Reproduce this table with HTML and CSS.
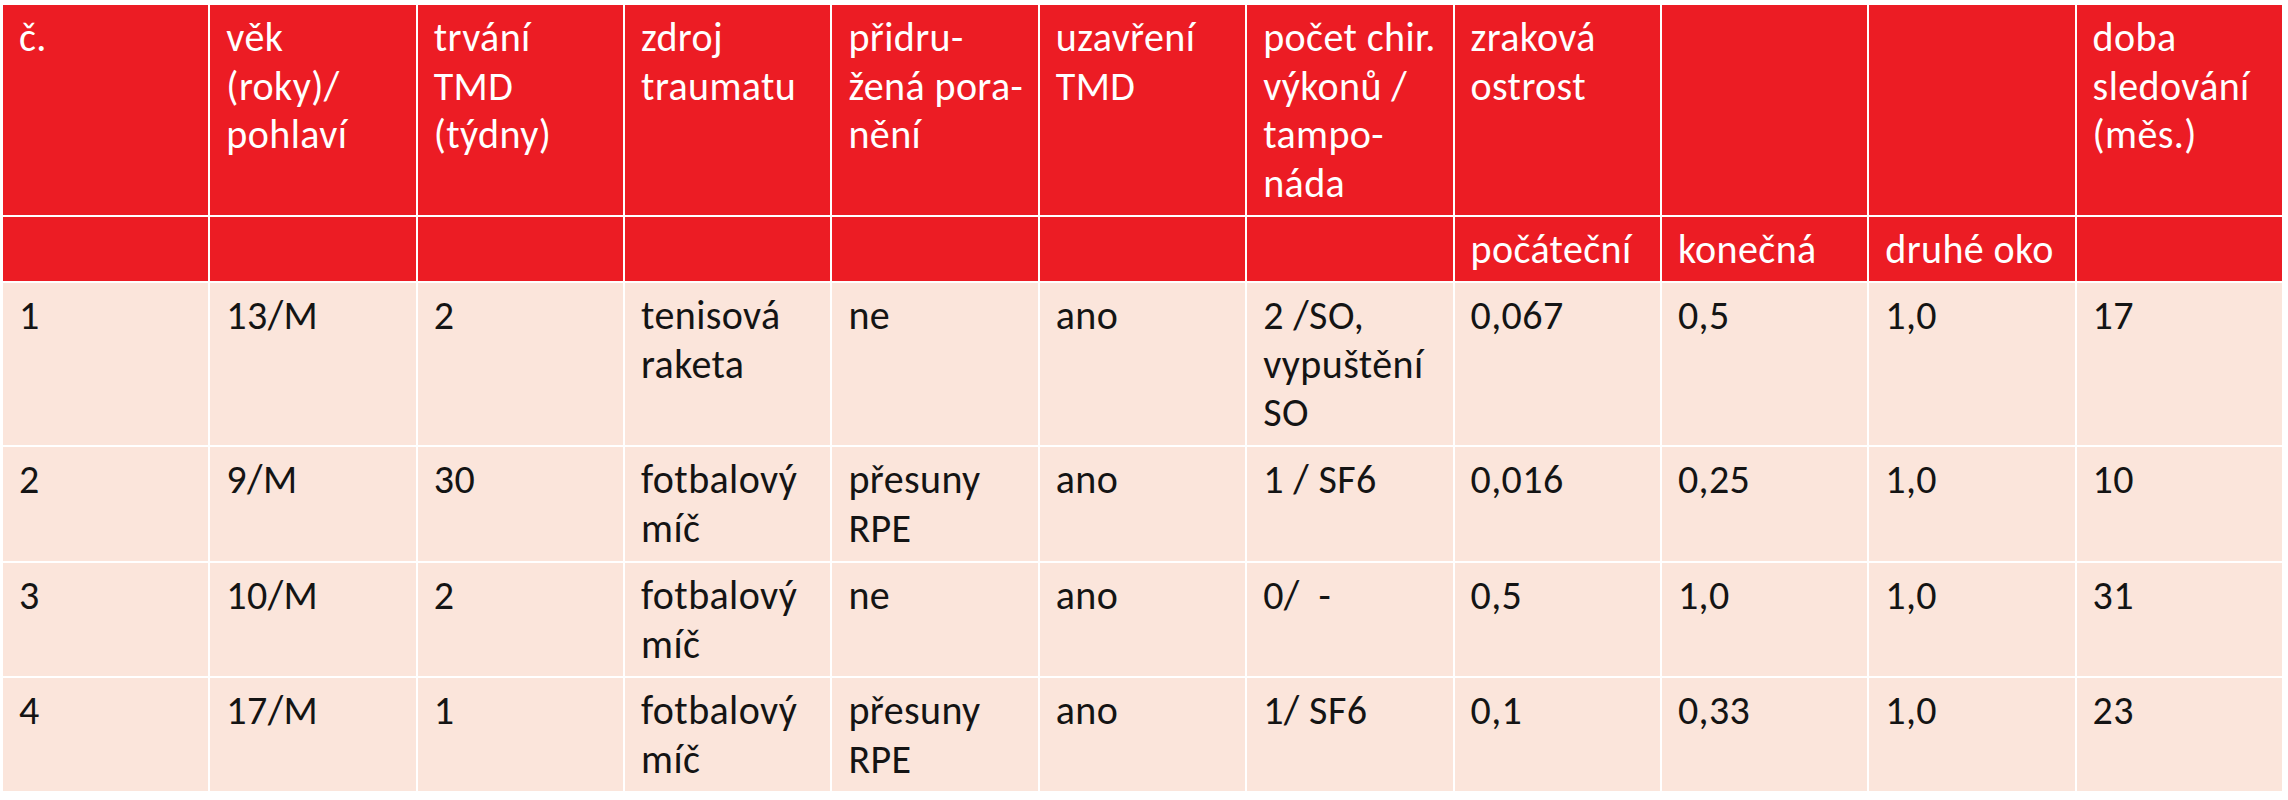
FILE: index.html
```html
<!DOCTYPE html>
<html lang="cs">
<head>
<meta charset="utf-8">
<title>Tabulka</title>
<link rel="stylesheet" href="styles.css">
</head>
<body>
<table class="data">
  <colgroup>
    <col class="c"><col class="c"><col class="c"><col class="c"><col class="c"><col class="c"><col class="c"><col class="c"><col class="c"><col class="c"><col class="c">
  </colgroup>
  <thead>
    <tr class="h1">
      <th>č.</th>
      <th>věk<br>(roky)/<br>pohlaví</th>
      <th>trvání<br>TMD<br>(týdny)</th>
      <th>zdroj<br>traumatu</th>
      <th>přidru-<br>žená pora-<br>nění</th>
      <th>uzavření<br>TMD</th>
      <th>počet chir.<br>výkonů /<br>tampo-<br>náda</th>
      <th>zraková<br>ostrost</th>
      <th></th>
      <th></th>
      <th>doba<br>sledování<br>(měs.)</th>
    </tr>
    <tr class="h2">
      <th></th><th></th><th></th><th></th><th></th><th></th><th></th>
      <th>počáteční</th>
      <th>konečná</th>
      <th>druhé oko</th>
      <th></th>
    </tr>
  </thead>
  <tbody>
    <tr class="r1">
      <td>1</td><td>13/M</td><td>2</td><td>tenisová<br>raketa</td><td>ne</td><td>ano</td><td>2 /SO,<br>vypuštění<br>SO</td><td>0,067</td><td>0,5</td><td>1,0</td><td>17</td>
    </tr>
    <tr class="r2">
      <td>2</td><td>9/M</td><td>30</td><td>fotbalový<br>míč</td><td>přesuny<br>RPE</td><td>ano</td><td>1 / SF6</td><td>0,016</td><td>0,25</td><td>1,0</td><td>10</td>
    </tr>
    <tr class="r3">
      <td>3</td><td>10/M</td><td>2</td><td>fotbalový<br>míč</td><td>ne</td><td>ano</td><td>0/&nbsp; -</td><td>0,5</td><td>1,0</td><td>1,0</td><td>31</td>
    </tr>
    <tr class="r4">
      <td>4</td><td>17/M</td><td>1</td><td>fotbalový<br>míč</td><td>přesuny<br>RPE</td><td>ano</td><td>1/ SF6</td><td>0,1</td><td>0,33</td><td>1,0</td><td>23</td>
    </tr>
  </tbody>
</table>
</body>
</html>
```
FILE: styles.css
```css
html, body {
  margin: 0;
  padding: 0;
  background: #ffffff;
}

.data {
  margin: 3px 0 0 1px;
  width: 2283px;
  table-layout: fixed;
  border-collapse: separate;
  border-spacing: 2px;
  font-family: Carlito, Calibri, "Liberation Sans Narrow", "Open Sans", sans-serif;
  font-size: 40px;
  letter-spacing: 0.4px;
  line-height: 48.5px;
}

.data th,
.data td {
  box-sizing: border-box;
  vertical-align: top;
  text-align: left;
  padding: 9px 6px 0 16px;
  white-space: nowrap;
  overflow: hidden;
}

.data th {
  background: #ec1c24;
  color: #ffffff;
  font-weight: normal;
}

.data td {
  background: #fbe5db;
  color: #141414;
}

.h1 > th { height: 210px; }
.h2 > th { height: 64px; }
.r1 > td { height: 162px; }
.r2 > td { height: 114px; }
.r3 > td { height: 113px; }
.r4 > td { height: 113px; }
```
